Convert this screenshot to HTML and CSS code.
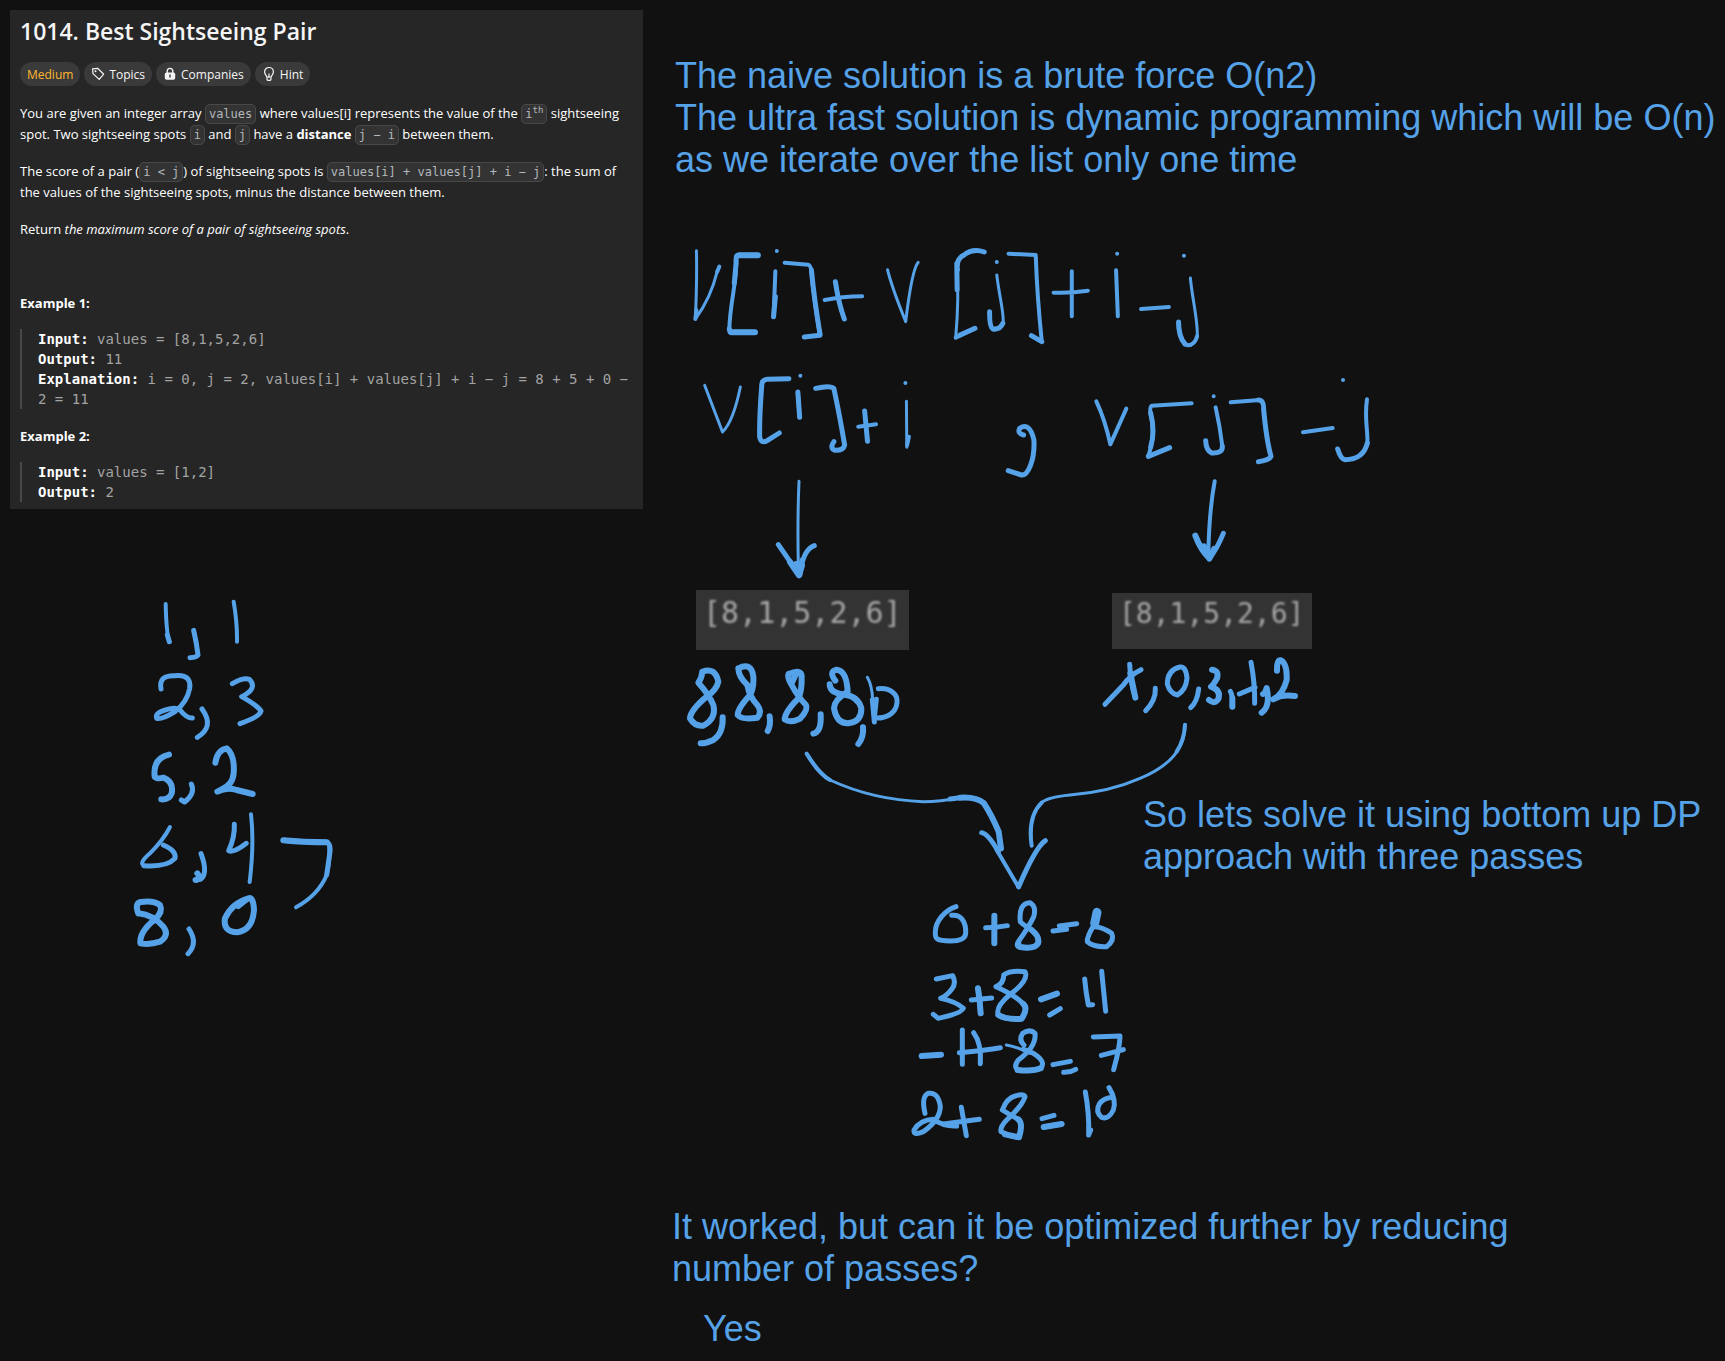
FILE: index.html
```html
<!DOCTYPE html>
<html lang="en">
<head>
<meta charset="utf-8">
<meta name="viewport" content="width=device-width, initial-scale=1">
<title>1014. Best Sightseeing Pair</title>
<link rel="stylesheet" href="styles.css">
</head>
<body>
<main class="board">
  <article class="problem">
    <h1 class="problem-title">1014. Best Sightseeing Pair</h1>
    <div class="tags">
      <span class="pill pill-medium">Medium</span>
      <button class="pill" type="button">
        <svg class="icon" viewBox="0 0 14 14" aria-hidden="true"><path d="M1.6 1.8 6.6 1.3 12.7 7.2 8.2 12.4 2 6.6Z" fill="none" stroke="currentColor" stroke-width="1.2" stroke-linejoin="round"/><circle cx="4.5" cy="4.3" r="1" fill="currentColor"/></svg>
        Topics
      </button>
      <button class="pill" type="button">
        <svg class="icon" viewBox="0 0 14 14" aria-hidden="true"><path d="M4.2 6V4.2a2.8 2.8 0 0 1 5.6 0V6" fill="none" stroke="currentColor" stroke-width="1.4"/><rect x="1.8" y="5.4" width="10.4" height="7.4" rx="1.8" fill="currentColor"/><path d="M7 8v2" stroke="#3a3a3a" stroke-width="1.4" stroke-linecap="round"/></svg>
        Companies
      </button>
      <button class="pill" type="button">
        <svg class="icon" viewBox="0 0 14 14" aria-hidden="true"><path d="M4.8 10.2C4.8 8.4 2.6 7.6 2.6 4.9a4.4 4.4 0 0 1 8.8 0c0 2.7-2.2 3.5-2.2 5.3ZM5 11v1.3q0 1 1 1h2q1 0 1-1V11M7 6.5v3" fill="none" stroke="currentColor" stroke-width="1.2" stroke-linejoin="round"/></svg>
        Hint
      </button>
    </div>
    <p>You are given an integer array <code>values</code> where values[i] represents the value of the <code>i<sup>th</sup></code> sightseeing<br>spot. Two sightseeing spots <code>i</code> and <code>j</code> have a <strong>distance</strong> <code>j − i</code> between them.</p>
    <p>The score of a pair (<code>i &lt; j</code>) of sightseeing spots is <code>values[i] + values[j] + i − j</code>: the sum of<br>the values of the sightseeing spots, minus the distance between them.</p>
    <p>Return <em>the maximum score of a pair of sightseeing spots</em>.</p>
    <p>&nbsp;</p>
    <p><strong>Example 1:</strong></p>
    <pre><strong>Input:</strong> values = [8,1,5,2,6]
<strong>Output:</strong> 11
<strong>Explanation:</strong> i = 0, j = 2, values[i] + values[j] + i − j = 8 + 5 + 0 −
2 = 11</pre>
    <p><strong>Example 2:</strong></p>
    <pre><strong>Input:</strong> values = [1,2]
<strong>Output:</strong> 2</pre>
  </article>

  <p class="note note-intro">The naive solution is a brute force O(n2)<br>The ultra fast solution is dynamic programming which will be O(n)<br>as we iterate over the list only one time</p>
  <p class="note note-approach">So lets solve it using bottom up DP<br>approach with three passes</p>
  <p class="note note-question">It worked, but can it be optimized further by reducing<br>number of passes?</p>
  <p class="note note-answer">Yes</p>

  <div class="snippet snippet-left"><span>[8,1,5,2,6]</span></div>
  <div class="snippet snippet-right"><span>[8,1,5,2,6]</span></div>

  <!-- v[i] + v[j] + i - j, split into v[i] + i -->
  <svg class="ink ink-formula" viewBox="0 0 1568 780" preserveAspectRatio="none" role="img" aria-label="v[i] + v[j] + i - j; v[i] + i ,">
    <g class="w3">
      <path d="M102 62Q104 150 99 267Q142 205 160 125L166 110"/>
      <path d="M637 119Q650 175 688 275Q705 120 723 97"/>
      <path d="M125 466Q155 550 175 606Q205 575 225 471"/>
      <path d="M943 135C950 200 966 260 960 282"/>
      <path d="M1485 144C1490 205 1508 280 1504 322"/>
      <path d="M690 514 691 652"/>
      <path d="M831 100Q838 200 828 323"/>
    </g>
    <g class="w4">
      <path d="M213 80C218 150 196 210 194 300"/>
      <path d="M323 124 318 260"/>
      <path d="M461 210Q510 200 566 199M491 155Q500 220 516 267"/>
      <path d="M828 323 882 295"/>
      <path d="M976 71 1052 75Q1056 200 1069 335"/>
      <path d="M1153 124V259M1102 188Q1150 190 1198 182"/>
      <path d="M1277 121 1282 259M1347 237 1425 231"/>
      <path d="M1504 318Q1498 345 1478 346Q1452 335 1452 276"/>
      <path d="M386 486 391 562M555 590 605 583M697 620 692 645"/>
      <path d="M327 63h.1M943 96h.1M1280 71h.1M1467 77h.1M393 437h.1M687 459h.1"/>
      <path d="M349 98 415 104Q422 106 424 125Q430 200 448 316"/>
      <path d="M160 125 166 110M102 240 99 267"/>
    </g>
    <g class="w5">
      <path d="M274 76H218Q212 76 213 100L208 160M194 296 196 306 266 307M448 316 404 321"/>
      <path d="M908 66Q875 54 850 76Q828 88 833 120M831 100 832 180"/>
      <path d="M491 155Q500 220 516 267M882 295 840 315M323 200 318 260"/>
      <path d="M960 280Q952 300 932 297Q922 290 923 245M1069 335 1040 317M424 120Q432 210 448 312"/>
      <path d="M361 446 300 448Q285 450 285 465Q278 560 279 620Q282 642 300 632L334 609"/>
      <path d="M436 475Q478 465 487 476Q502 550 517 645Q514 662 490 661Q474 655 487 635M573 543 581 634"/>
      <path d="M1018 615Q1000 610 1007 595Q1035 575 1047 630C1050 690 1030 738 1012 735L975 722"/>
      <path d="M1452 276Q1452 320 1470 342M386 486 391 562"/>
    </g>
    <path class="w6" d="M274 76H222M200 307H266"/>
  </svg>

  <!-- v[j] - j and the arrow down to the right array -->
  <svg class="ink ink-right-term" viewBox="0 0 1020 570" role="img" aria-label="v[j] - j">
    <g transform="translate(-180 -40)">
      <g class="w4">
        <path d="M289 125Q315 180 331 254L379 147"/>
        <path d="M575 131 455 138Q448 145 452 165Q468 220 445 290"/>
        <path d="M647 143Q660 200 667 260M692 128 780 121M909 218 998 205"/>
        <path d="M1101 119C1092 180 1105 215 1102 255"/>
        <path d="M641 110h.1M1029 61h.1M644 365Q628 450 625 580"/>
      </g>
      <g class="w5">
        <path d="M452 160Q466 215 452 262M445 290 509 264"/>
        <path d="M667 260Q668 282 635 280Q618 272 617 243"/>
        <path d="M775 121Q792 121 791 150Q800 245 813 290Q808 302 775 306"/>
        <path d="M1102 250Q1090 300 1035 300Q1022 298 1013 268"/>
        <path d="M670 521Q650 570 628 596L620 570"/>
      </g>
      <path class="w6" d="M586 528Q602 570 626 594M612 560 628 597 642 568"/>
    </g>
  </svg>

  <!-- arrow to the left array and the running maximum below it -->
  <svg class="ink ink-left-pass" viewBox="0 0 840 900" role="img" aria-label="8, 8, 8, 8, 10">
    <g class="w3"><path d="M387 34Q382 150 385 290M592 622Q606 645 608 690"/></g>
    <g class="w5">
      <path d="M325 224 387 314M433 227Q398 240 390 314M378 280 387 310 396 270"/>
      <path d="M625 656C660 652 684 672 681 698C678 728 652 746 614 744M607 690 613 756M619 688 613 744"/>
    </g>
    <g class="w6">
      <path d="M360 276 387 316 396 286"/>
      <path d="M97 605Q135 590 145 635Q140 660 110 680Q62 720 60 745Q75 770 100 767Q140 745 130 705Q118 675 85 638Q95 625 97 605"/>
      <path d="M158 742Q160 790 130 810Q110 820 92 820"/>
      <path d="M205 595Q245 575 250 620Q252 655 240 675Q203 715 203 735Q215 750 262 743Q278 725 262 705Q238 680 232 645Q205 620 205 595"/>
      <path d="M299 739Q303 765 293 783"/>
      <path d="M356 612Q395 595 395 620Q396 665 385 685Q345 725 344 748Q360 760 390 746Q415 720 408 705Q382 678 365 645Q350 620 356 612M365 640 378 612"/>
      <path d="M452 733Q455 785 430 791"/>
      <path d="M496 632Q475 605 500 599Q530 602 533 665Q492 690 492 715Q500 762 535 760Q575 755 574 715Q565 680 525 674Q480 670 479 643"/>
      <path d="M579 772Q582 800 565 822"/>
    </g>
  </svg>

  <!-- v[j] - j values for the right array -->
  <svg class="ink ink-right-pass" viewBox="0 0 780 510" role="img" aria-label="x, 0, 3, -1, 2">
    <g class="w5">
      <path d="M183 329Q150 345 130 375L75 433M149 313Q152 370 166 413"/>
      <path d="M226 385Q228 420 197 452M356 387Q352 425 332 443"/>
      <path d="M300 321Q262 330 262 372Q270 400 292 405Q318 390 321 355Q318 318 300 321"/>
      <path d="M451 394Q460 410 457 440M478 402 525 382M513 307Q525 370 524 430"/>
    </g>
    <g class="w6">
      <path d="M151 340 166 413M457 415 457 440"/>
      <path d="M396 329Q418 332 411 355Q400 375 393 380Q422 390 416 415Q405 435 387 420"/>
      <path d="M549 402Q555 400 560 384Q572 440 545 458"/>
      <path d="M591 332Q590 300 602 301Q622 310 620 360Q608 405 580 418Q605 402 645 408"/>
    </g>
  </svg>

  <!-- value, index pairs -->
  <svg class="ink ink-pairs" viewBox="0 0 750 1170" role="img" aria-label="1,1 2,3 5,2 6,4 8,0">
    <g class="w4">
      <path d="M197 72Q199 160 208 185M401 65Q412 130 411 185M453 703Q463 790 449 906"/>
      <path d="M688 800Q690 850 680 885Q655 945 588 982"/>
      <path d="M210 741Q190 780 150 820Q115 850 132 857"/>
    </g>
    <g class="w5">
      <path d="M202 165 208 185M281 151Q290 190 294 225Q290 232 270 233"/>
      <path d="M183 327Q175 285 225 287Q275 282 269 325Q262 365 225 395Q185 420 170 415Q165 400 190 392Q225 378 240 390Q260 415 277 414"/>
      <path d="M306 387Q345 440 292 472"/>
      <path d="M397 311Q430 292 448 298Q475 325 425 350Q470 375 483 393Q480 410 420 431"/>
      <path d="M274 612Q287 640 254 666L244 660"/>
      <path d="M132 857Q200 862 225 835Q230 812 190 795M403 733Q405 770 386 812Q400 820 439 790"/>
      <path d="M303 821Q325 880 302 898L285 900"/>
      <path d="M267 1047Q295 1090 264 1121M550 781Q610 787 680 787Q692 790 690 815L680 885"/>
    </g>
    <g class="w6">
      <path d="M207 524Q158 535 164 590Q170 598 190 593Q222 605 215 640Q208 660 184 658"/>
      <path d="M346 548Q352 510 380 505Q405 525 401 580Q398 615 365 628L352 635Q380 620 410 630L458 642"/>
      <path d="M115 1000Q103 970 122 966Q160 960 180 975Q190 995 165 1018Q118 1055 121 1090Q150 1095 180 1085Q210 1065 190 1040Q160 1005 115 1000"/>
      <path d="M445 955Q395 970 375 1015Q368 1055 412 1057Q458 1050 462 990Q460 950 445 955Q430 965 415 978"/>
      <path d="M550 781Q610 787 680 787M292 880Q306 895 288 900"/>
    </g>
  </svg>

  <!-- both passes flow into the sums -->
  <svg class="ink ink-merge" viewBox="0 0 1320 630" aria-hidden="true">
    <g class="w3">
      <path d="M80 161Q115 225 150 240Q280 300 430 305Q480 305 540 293"/>
      <path d="M1215 74Q1215 180 1080 235Q990 275 870 285Q800 292 785 308Q745 345 755 437"/>
    </g>
    <g class="w4">
      <path d="M80 161Q118 222 150 240M1215 74Q1213 120 1190 155M785 308Q742 350 755 437M650 450 716 562"/>
    </g>
    <g class="w5"><path d="M605 398Q625 402 655 455M716 560Q768 440 796 422M510 297 540 293"/></g>
    <g class="w6"><path d="M540 293Q590 290 612 310Q635 345 656 395L663 445"/></g>
  </svg>

  <!-- sums of the two passes -->
  <svg class="ink ink-sums" viewBox="0 0 780 780" role="img" aria-label="0+8=8, 3+8=11, -1+8=7, 2+8=10">
    <g class="w5">
      <path d="M198 50C165 60 136 95 136 125C134 148 142 152 180 153C212 153 226 146 227 130C229 95 212 72 185 76"/>
      <path d="M287 113Q320 113 352 107"/>
      <path d="M391 95Q385 40 420 38Q440 50 431 80Q420 105 385 155Q380 165 390 171Q435 178 444 160Q450 140 425 120Q400 105 391 95"/>
      <path d="M489 123 530 118M508 108 560 101"/>
      <path d="M615 100Q590 140 592 155Q610 172 650 170Q675 150 665 130Q640 112 615 110"/>
      <path d="M139 267 188 257Q200 280 185 298Q170 318 152 325Q200 335 220 355Q215 370 145 385L130 373"/>
      <path d="M264 295Q270 335 272 370M244 330 305 324"/>
      <path d="M318 290Q342 280 341 255Q360 240 405 245Q418 270 362 312Q315 350 325 375Q350 390 395 386Q415 355 400 342Q375 315 318 290"/>
      <path d="M453 328 501 311M479 375 511 356M584 267Q588 310 595 345L608 344M635 244 647 364"/>
      <path d="M217 420V523M208 488Q290 480 331 473M251 428Q275 460 271 521"/>
      <path d="M402 465Q385 450 398 430Q420 415 435 430Q440 470 385 510Q370 530 383 540Q430 545 452 535Q470 515 430 490Q410 480 400 478"/>
      <path d="M489 524 541 514M521 547Q540 548 557 538M610 441 690 438Q690 470 671 539M634 496 700 479"/>
      <path d="M105 670Q93 620 115 610Q145 605 151 650Q150 690 100 725Q70 738 72 720Q90 690 130 688Q160 710 200 708"/>
      <path d="M214 652 229 737M160 702 268 688"/>
      <path d="M337 660Q350 625 375 618Q400 610 405 620Q395 650 350 690Q330 710 333 725Q360 740 387 742Q400 700 385 688Q360 675 337 660"/>
      <path d="M456 686 492 676M461 711 515 702M586 606Q598 670 596 735L602 720"/>
      <path d="M657 593Q680 630 670 660Q655 690 635 682Q615 665 628 642Q640 625 665 622"/>
    </g>
    <g class="w6">
      <path d="M313 77V160M95 498 153 494M453 328 501 311M461 711 515 702M264 295Q270 335 272 370"/>
      <path d="M385 160Q380 168 390 171Q435 178 444 160Q450 140 425 120M325 375Q350 390 395 386Q415 355 400 342M383 540Q430 545 452 535M385 688Q400 700 387 742L345 733"/>
    </g>
    <path class="w9" d="M621 67 614 100"/>
    <path class="w3" d="M349 465Q380 470 420 490"/>
  </svg>
</main>
</body>
</html>
```
FILE: styles.css
```css
* {
  box-sizing: border-box;
}

body {
  margin: 0;
  background: #111;
  color: #fff;
  font-family: "Open Sans", "Noto Sans", sans-serif;
}

.board {
  position: relative;
  min-height: 100vh;
  padding: 10px;
  overflow: hidden;
}

/* Problem statement card */
.problem {
  width: 633px;
  max-width: 100%;
  padding: 5px 10px 7px;
  background: #262626;
  font-size: 13px;
  line-height: 21px;
  white-space: nowrap;
}

.problem-title {
  margin: 0 0 15px;
  color: #f5f5f5;
  font-size: 23px;
  font-weight: 600;
  line-height: 32px;
}

.tags {
  display: flex;
  gap: 4px;
  margin-bottom: 17px;
}

.pill {
  display: flex;
  align-items: center;
  gap: 4px;
  height: 24px;
  padding: 0 7px;
  border: 0;
  border-radius: 12px;
  background: #3a3a3a;
  color: #f5f5f5;
  font: 12px "Open Sans", "Noto Sans", sans-serif;
}

.pill-medium {
  color: #ffb830;
}

.icon {
  width: 14px;
  height: 14px;
}

.problem p {
  margin: 0 0 16px;
}

.problem code {
  padding: 2px 3px;
  border: 1px solid #484848;
  border-radius: 5px;
  background: #333;
  color: #b4b8bd;
  font: 12px "DejaVu Sans Mono", monospace;
}

.problem sup {
  font-size: 9px;
  line-height: 0;
}

.problem pre {
  margin: -1px 0 17px;
  padding-left: 16px;
  border-left: 2px solid #484848;
  color: #a3a3a3;
  font: 14px/20px "DejaVu Sans Mono", monospace;
}

.problem pre:last-child {
  margin-bottom: 0;
}

.problem pre strong {
  color: #fff;
}

/* Typed notes on the canvas */
.note {
  position: absolute;
  margin: 0;
  color: #56a2e8;
  font: 36px/42px "Liberation Sans", Arial, sans-serif;
  white-space: nowrap;
}

.note-intro { left: 675px; top: 55px; }
.note-approach { left: 1143px; top: 794px; }
.note-question { left: 672px; top: 1206px; }
.note-answer { left: 703px; top: 1308px; }

/* Enlarged clippings of the input array */
.snippet {
  position: absolute;
  padding: 5px 7px;
  background: #333;
  color: #a8a8a8;
  font-family: "DejaVu Sans Mono", monospace;
}

.snippet span {
  display: block;
  filter: blur(1px);
}

.snippet-left {
  left: 696px;
  top: 590px;
  width: 213px;
  height: 60px;
  font-size: 30px;
  line-height: 36px;
}

.snippet-right {
  left: 1112px;
  top: 593px;
  width: 200px;
  height: 56px;
  font-size: 28px;
  line-height: 32px;
}

/* Pen strokes */
.ink {
  position: absolute;
  fill: none;
  stroke: #56a2e8;
  stroke-linecap: round;
  stroke-linejoin: round;
  pointer-events: none;
}

.ink path {
  vector-effect: non-scaling-stroke;
}

.w3 { stroke-width: 3px; }
.w4 { stroke-width: 4px; }
.w5 { stroke-width: 5px; }
.w6 { stroke-width: 6px; }
.w9 { stroke-width: 9px; }

.ink-formula { left: 660px; top: 230px; width: 560px; height: 260px; }
.ink-right-term { left: 1060px; top: 373px; width: 340px; height: 190px; }
.ink-left-pass { left: 670px; top: 470px; width: 280px; height: 300px; }
.ink-right-pass { left: 1080px; top: 560px; width: 260px; height: 170px; }
.ink-pairs { left: 100px; top: 580px; width: 250px; height: 390px; }
.ink-merge { left: 780px; top: 700px; width: 440px; height: 210px; }
.ink-sums { left: 890px; top: 890px; width: 260px; height: 260px; }
```
